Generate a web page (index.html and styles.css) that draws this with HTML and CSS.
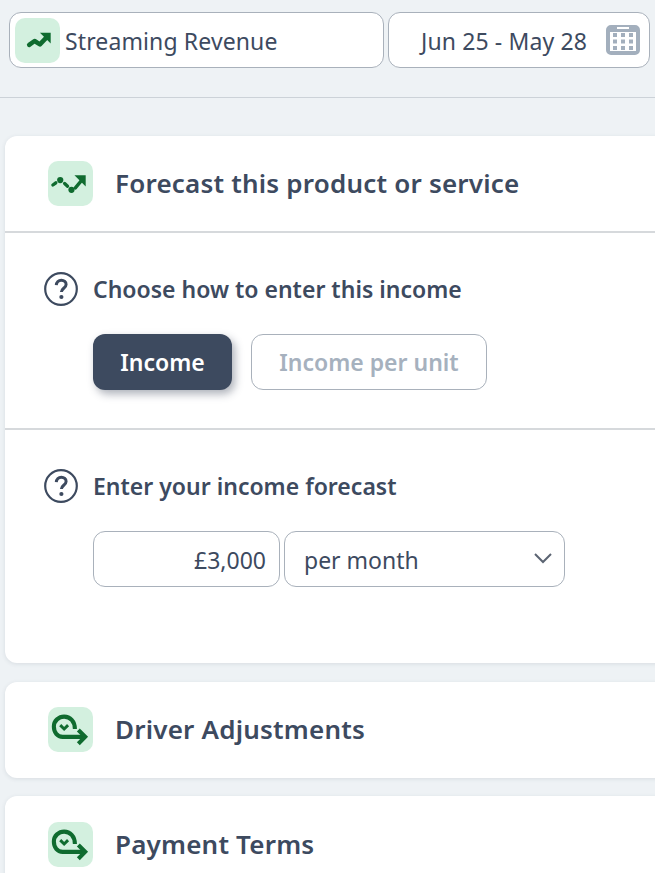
FILE: index.html
```html
<!DOCTYPE html>
<html lang="en">
<head>
<meta charset="utf-8">
<title>Streaming Revenue</title>
<link rel="stylesheet" href="styles.css">
</head>
<body>
<header class="topbar">
  <div class="pill name-pill">
    <span class="tile">
      <svg class="tile-ico" viewBox="0 0 46 46"><path d="M14.500 27.500 20 23.500l5.500 3.500 7.500-8" fill="none" stroke="#0f6b2f" stroke-width="4.600" stroke-linecap="round" stroke-linejoin="round"/><path d="M25.500 15h11v11z" fill="#0f6b2f"/></svg>
    </span>
    <span class="pill-name">Streaming Revenue</span>
  </div>
  <div class="pill date-pill">
    <span class="pill-date">Jun 25 - May 28</span>
    <svg class="cal" viewBox="0 0 34 30">
      <path fill-rule="evenodd" fill="#a3afbd" d="M5 0h24a5 5 0 0 1 5 5v20a5 5 0 0 1-5 5H5a5 5 0 0 1-5-5V5a5 5 0 0 1 5-5zM11 2v2h12V2z"/>
      <path fill="#fff" d="M4 7h26v19H4z"/>
      <path fill="#a3afbd" d="M7 8h4v4H7zM15 8h4v4h-4zM23 8h4v4h-4zM7 14.500h4v4H7zM15 14.500h4v4h-4zM23 14.500h4v4h-4zM7 21h4v4H7zM15 21h4v4h-4zM23 21h4v4h-4z"/>
    </svg>
  </div>
</header>
<main class="cards">
  <section class="card">
    <div class="card-head">
      <span class="tile">
        <svg class="tile-ico" viewBox="0 0 46 46"><path d="M5 24.500l3-2.200M17 23l3 2.800M28 27.500l7-8.500" fill="none" stroke="#0f6b2f" stroke-width="3.400" stroke-linecap="round"/><circle cx="12.500" cy="19.500" r="3.200" fill="#0f6b2f"/><circle cx="24" cy="29.500" r="3.200" fill="#0f6b2f"/><path d="M27 14.500h11.500V26z" fill="#0f6b2f"/></svg>
      </span>
      <h2 class="card-title">Forecast this product or service</h2>
    </div>
    <div class="block block-choose">
      <div class="question">
        <svg class="help" viewBox="0 0 34 34"><circle cx="17" cy="17" r="15.800" fill="none" stroke="#3d4a5f" stroke-width="2.200"/><path d="M12.300 13.200c.2-3 2.300-5 5-5 2.800 0 4.800 1.800 4.800 4.200 0 3.800-4.700 3.900-4.700 7.600" fill="none" stroke="#3d4a5f" stroke-width="3"/><circle cx="17.400" cy="25" r="2.100" fill="#3d4a5f"/></svg>
        <span class="q-text">Choose how to enter this income</span>
      </div>
      <div class="options">
        <button class="opt opt-on">Income</button>
        <button class="opt opt-off">Income per unit</button>
      </div>
    </div>
    <div class="block block-enter">
      <div class="question">
        <svg class="help" viewBox="0 0 34 34"><circle cx="17" cy="17" r="15.800" fill="none" stroke="#3d4a5f" stroke-width="2.200"/><path d="M12.300 13.200c.2-3 2.300-5 5-5 2.800 0 4.800 1.800 4.800 4.200 0 3.800-4.700 3.900-4.700 7.600" fill="none" stroke="#3d4a5f" stroke-width="3"/><circle cx="17.400" cy="25" r="2.100" fill="#3d4a5f"/></svg>
        <span class="q-text">Enter your income forecast</span>
      </div>
      <div class="inputs">
        <div class="field amount">£3,000</div>
        <div class="field period">
          <span>per month</span>
          <svg class="chev" viewBox="0 0 20 12"><path d="M2 2l8 8 8-8" fill="none" stroke="#5b6472" stroke-width="2"/></svg>
        </div>
      </div>
    </div>
  </section>
  <section class="card card-short">
    <div class="card-head head-plain">
      <span class="tile">
        <svg class="tile-ico" viewBox="0 0 46 46"><path d="M37 30.500H15C9.500 30.500 6 26 6 20C6 14 11 9.800 16.500 9.800 22.500 9.800 27.500 14.500 27.500 22.500" fill="none" stroke="#0f6b2f" stroke-width="4.200"/><path d="M31 23.500l7 7-7 7" fill="none" stroke="#0f6b2f" stroke-width="4.200"/><path d="M12.500 18.500l4 4 4-4" fill="none" stroke="#0f6b2f" stroke-width="3"/></svg>
      </span>
      <h2 class="card-title">Driver Adjustments</h2>
    </div>
  </section>
  <section class="card card-short">
    <div class="card-head head-plain">
      <span class="tile">
        <svg class="tile-ico" viewBox="0 0 46 46"><path d="M37 30.500H15C9.500 30.500 6 26 6 20C6 14 11 9.800 16.500 9.800 22.500 9.800 27.500 14.500 27.500 22.500" fill="none" stroke="#0f6b2f" stroke-width="4.200"/><path d="M31 23.500l7 7-7 7" fill="none" stroke="#0f6b2f" stroke-width="4.200"/><path d="M12.500 18.500l4 4 4-4" fill="none" stroke="#0f6b2f" stroke-width="3"/></svg>
      </span>
      <h2 class="card-title">Payment Terms</h2>
    </div>
  </section>
</main>
</body>
</html>
```
FILE: styles.css
```css
* { box-sizing: border-box; }
html, body { height: 100%; }
body {
  margin: 0;
  background: #eef2f5;
  color: #3d4a5f;
  font-family: "Noto Sans", "Open Sans", sans-serif;
  overflow: hidden;
}
.topbar {
  height: 98px;
  padding: 12px 5px 0 9px;
  display: flex;
  align-items: flex-start;
  gap: 4px;
  border-bottom: 1px solid #ccd2d8;
}
.pill {
  height: 56px;
  background: #fff;
  border: 1px solid #a9b1bb;
  border-radius: 12px;
  display: flex;
  align-items: center;
}
.name-pill { width: 375px; padding-left: 5px; gap: 5px; }
.date-pill { width: 262px; padding: 0 9px 0 32px; justify-content: space-between; }
.tile {
  width: 45px;
  height: 45px;
  flex: none;
  background: #d3f0df;
  border-radius: 10px;
  display: flex;
}
.tile-ico { width: 45px; height: 45px; }
.pill-name, .pill-date { font-size: 23px; letter-spacing: 0.12px; padding-top: 2px; }
.cal { width: 34px; height: 30px; }
.cards {
  margin: 38px -20px 0 5px;
  display: flex;
  flex-direction: column;
  gap: 19px;
}
.card {
  background: #fff;
  border-radius: 12px;
  box-shadow: 0 1px 4px rgba(60, 70, 90, .12);
}
.card-head {
  height: 97px;
  padding: 25px 0 0 43px;
  display: flex;
  align-items: flex-start;
  gap: 22px;
  border-bottom: 2px solid #d6d9dc;
}
.head-plain { height: 96px; border-bottom: 0; }
.card-short + .card-short { margin-top: -1px; }
.card-short + .card-short .card-head { padding-top: 26px; }
.card-title {
  margin: 0;
  font-size: 26px;
  font-weight: 600;
  line-height: 45px;
  letter-spacing: 0.2px;
}
.block { padding: 39px 0 0 39px; }
.block-choose { height: 197px; border-bottom: 2px solid #d6d9dc; }
.block-enter { height: 233px; }
.question { display: flex; align-items: center; gap: 15px; height: 34px; }
.help { width: 34px; height: 34px; flex: none; }
.q-text { font-size: 23px; font-weight: 600; }
.options { margin: 28px 0 0 49px; display: flex; gap: 19px; }
.opt {
  height: 56px;
  border-radius: 12px;
  font: 600 23px "Noto Sans", sans-serif;
  padding: 0;
}
.opt-on {
  width: 139px;
  background: #3d4a5f;
  color: #fff;
  border: 0;
  box-shadow: 3px 4px 8px rgba(50, 60, 80, .4);
}
.opt-off {
  width: 236px;
  background: #fff;
  color: #a6b1be;
  border: 1px solid #a9b1bb;
}
.inputs { margin: 28px 0 0 49px; display: flex; gap: 4px; }
.field {
  height: 56px;
  border: 1px solid #a9b1bb;
  border-radius: 12px;
  display: flex;
  align-items: center;
  font-size: 23px;
  padding-top: 2px;
}
.amount { width: 187px; justify-content: flex-end; padding-right: 13px; }
.period { width: 281px; padding: 2px 11px 0 19px; justify-content: space-between; }
.chev { width: 20px; height: 12px; margin-top: -4px; }
```
